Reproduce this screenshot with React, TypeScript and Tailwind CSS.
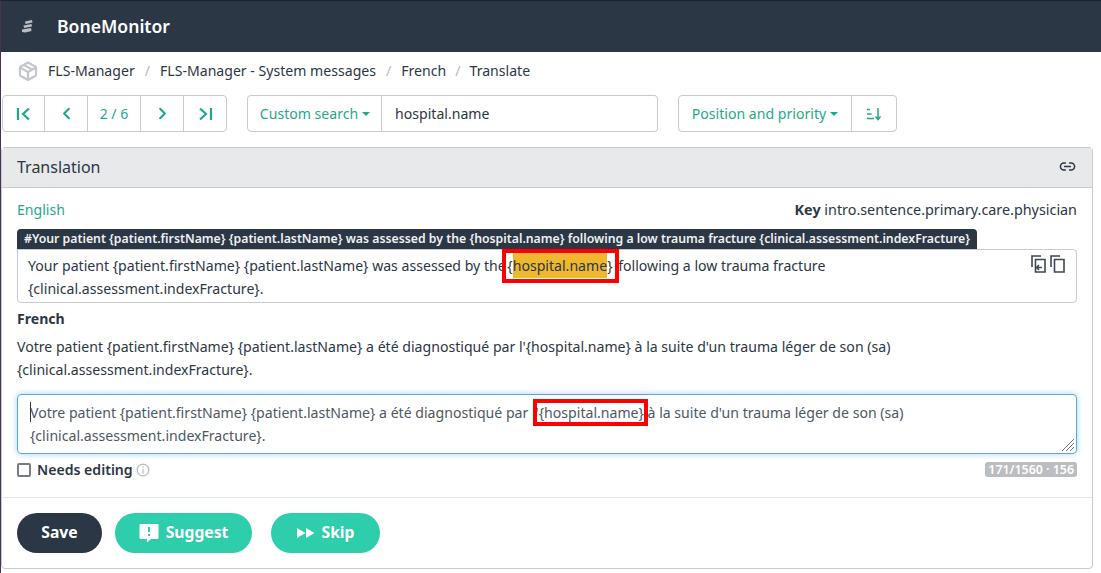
import { ChevronLeft, ChevronRight, Link2 } from "lucide-react";

const GREEN = "text-[#1fa88c]";

function FirstIcon() {
  return (
    <svg width="16" height="14" viewBox="0 0 16 14" fill="none" stroke="#1fa88c" strokeWidth="2.2">
      <path d="M2 1v12" />
      <path d="M13 1.500 7 7l6 5.500" />
    </svg>
  );
}

function LastIcon() {
  return (
    <svg width="16" height="14" viewBox="0 0 16 14" fill="none" stroke="#1fa88c" strokeWidth="2.2">
      <path d="M14 1v12" />
      <path d="M3 1.500 9 7l-6 5.500" />
    </svg>
  );
}

function Caret() {
  return <span className="ml-1 inline-block border-x-[4px] border-t-[4px] border-x-transparent border-t-[#1fa88c]" />;
}

function LogoIcon() {
  return (
    <svg width="13" height="13" viewBox="0 0 13 13" fill="#b9bec4">
      <path d="M4 1.500 11 0l.5 2.500-7 1.500z" />
      <path d="M2.500 5.500 10.500 4l.5 2.500-8 1.500z" />
      <path d="M1 9.500 10 8l.5 3-6 1.500-3.500-.5z" />
    </svg>
  );
}

function BoxIcon() {
  return (
    <svg width="20" height="20" viewBox="0 0 20 20" fill="none" stroke="#c4c7cb" strokeWidth="2.2" strokeLinejoin="round">
      <path d="M10 1.500 18 6v8.500L10 19l-8-4.500V6z" />
      <path d="M2 6.500 10 11l8-4.500" />
      <path d="M10 11v8" />
      <path d="M6 4l8 4.500" />
    </svg>
  );
}

function SortIcon() {
  return (
    <svg width="16" height="14" viewBox="0 0 16 14" fill="none" stroke="#1fa88c" strokeWidth="1.500">
      <path d="M1 2.500h3M1 7h4.500M1 11.500h7" />
      <path d="M12 1v11M9.500 9.500 12 12.500l2.500-3" />
    </svg>
  );
}

function CopyInIcon() {
  return (
    <svg width="15" height="18" viewBox="0 0 15 18" fill="none" stroke="#3d4854" strokeWidth="1.600">
      <path d="M1 12V1h9" />
      <path d="M4.500 4.500h9.500v12.500H4.500z" />
      <path d="M11 12.500H6M8 10l-2.500 2.500L8 15" />
    </svg>
  );
}

function CopyIcon() {
  return (
    <svg width="15" height="18" viewBox="0 0 15 18" fill="none" stroke="#3d4854" strokeWidth="1.600">
      <path d="M1 12V1h9" />
      <path d="M4.500 4.500h9.500v12.500H4.500z" />
    </svg>
  );
}

function RedBox({ className }: { className: string }) {
  return <span className={`pointer-events-none absolute border-[4px] border-[#f00] ${className}`} />;
}

export default function App() {
  return (
    <div className="h-[573px] w-[1101px] overflow-hidden border-l border-t border-l-[#4a3350] border-t-[#1a222b] bg-white font-['Noto_Sans',sans-serif] text-[14.1px] text-[#2b3745]">
      <header className="flex h-[51px] items-center bg-[#2b3745] pl-[20px]">
        <LogoIcon />
        <span className="ml-[23px] text-[17.6px] font-semibold text-white">BoneMonitor</span>
      </header>

      <nav className="flex h-[38px] items-center pl-[17px]">
        <BoxIcon />
        <span className="ml-[10px]">FLS-Manager</span>
        <span className="mx-[10px] text-[#b5b9be]">/</span>
        <span>FLS-Manager - System messages</span>
        <span className="mx-[10px] text-[#b5b9be]">/</span>
        <span>French</span>
        <span className="mx-[9px] text-[#b5b9be]">/</span>
        <span>Translate</span>
      </nav>

      <div className="mt-[5px] flex h-[37px] pl-[1px]">
        <div className={`flex w-[225px] rounded border border-[#c8cbce] ${GREEN}`}>
          <div className="flex w-[42px] items-center justify-center border-r border-[#c8cbce]">
            <FirstIcon />
          </div>
          <div className="flex w-[43px] items-center justify-center border-r border-[#c8cbce]">
            <ChevronLeft size={19} strokeWidth={2.6} />
          </div>
          <div className="flex w-[53px] items-center justify-center border-r border-[#c8cbce]">2 / 6</div>
          <div className="flex w-[43px] items-center justify-center border-r border-[#c8cbce]">
            <ChevronRight size={19} strokeWidth={2.6} />
          </div>
          <div className="flex flex-1 items-center justify-center">
            <LastIcon />
          </div>
        </div>

        <div className="ml-[20px] flex w-[411px]">
          <div className={`flex w-[135px] items-center justify-center rounded-l border border-[#c8cbce] pl-[1px] ${GREEN}`}>
            Custom search
            <Caret />
          </div>
          <div className="flex flex-1 items-center rounded-r border border-l-0 border-[#c8cbce] pl-[13px]">hospital.name</div>
        </div>

        <div className={`ml-[20px] flex w-[219px] rounded border border-[#c8cbce] ${GREEN}`}>
          <div className="flex w-[173px] items-center justify-center border-r border-[#c8cbce]">
            Position and priority
            <Caret />
          </div>
          <div className="flex flex-1 items-center justify-center">
            <SortIcon />
          </div>
        </div>
      </div>

      <section className="mt-[15px] w-[1092px] rounded border border-[#c8cbce]">
        <div className="flex h-[40px] items-center justify-between border-b border-[#c8cbce] bg-[#e8e9eb] pb-[2px] pl-[15px] pr-[16px] text-[16px]">
          <span>Translation</span>
          <Link2 size={17} strokeWidth={2.2} />
        </div>

        <div className="px-[15px] pt-[12px]">
          <div className="flex h-[20px] items-center justify-between">
            <span className={GREEN}>English</span>
            <span className="text-[14.35px]">
              <b className="font-bold">Key</b> intro.sentence.primary.care.physician
            </span>
          </div>

          <div className="mt-[9px] w-fit rounded-t bg-[#2b3745] px-[7px] pb-[1px] text-[12.27px] font-semibold leading-[19px] text-[#f0f1f2]">
            #Your patient {"{patient.firstName}"} {"{patient.lastName}"} was assessed by the {"{hospital.name}"} following a low trauma fracture {"{clinical.assessment.indexFracture}"}
          </div>

          <div className="relative h-[54px] w-[1060px] rounded-b rounded-tr border border-[#c8cbce] px-[10px] py-[4px] leading-[23px]">
            Your patient {"{patient.firstName}"} {"{patient.lastName}"} was assessed by the{" "}
            <span className="relative -ml-[2px] mr-[2px]">
              <RedBox className="-bottom-[8px] -left-[5px] -right-[6px] -top-[7px]" />
              {"{"}
              <span className="bg-[#f0b72f] py-[3px]">hospital.name</span>
              {"}"}
            </span>{" "}
            following a low trauma fracture
            <br />
            {"{clinical.assessment.indexFracture}"}.
            <div className="absolute right-[11px] top-[5px] flex gap-[4px]">
              <CopyInIcon />
              <CopyIcon />
            </div>
          </div>

          <div className="mt-[6px] font-bold leading-[19px]">French</div>
          <p className="mt-[7px] leading-[23px]">
            Votre patient {"{patient.firstName}"} {"{patient.lastName}"} a été diagnostiqué par l'{"{hospital.name}"} à la suite d'un trauma léger de son (sa)
            <br />
            {"{clinical.assessment.indexFracture}"}.
          </p>

          <div className="relative mt-[13px] h-[60px] w-[1060px] rounded border border-[#5aa9e6] px-[12px] py-[6px] leading-[23px] text-[#4d5864] shadow-[0_0_6px_#a8d3f5]">
            <span className="absolute left-[12px] top-[7px] h-[20px] w-px bg-[#2b3745]" />
            Votre patient {"{patient.firstName}"} {"{patient.lastName}"} a été diagnostiqué par l'
            <span className="relative">
              <RedBox className="-bottom-[4px] -left-[6px] -right-[4px] -top-[4px]" />
              {"{hospital.name}"}
            </span>{" "}
            à la suite d'un trauma léger de son (sa)
            <br />
            {"{clinical.assessment.indexFracture}"}.
            <svg className="absolute bottom-[1px] right-[1px]" width="14" height="14" viewBox="0 0 14 14" stroke="#777" strokeWidth="1">
              <path d="M1 13 13 1M5 13l8-8M9 13l4-4" />
            </svg>
          </div>

          <div className="mt-[5px] flex h-[21px] w-[1060px] items-center">
            <span className="h-[14px] w-[14px] rounded-[2px] border-2 border-[#777c85]" />
            <span className="ml-[6px] font-semibold">Needs editing</span>
            <svg className="ml-[3px]" width="14" height="14" viewBox="0 0 14 14" fill="none" stroke="#b8bbbf" strokeWidth="1.300">
              <circle cx="7" cy="7" r="5.800" />
              <path d="M7 6v4.500M7 3.500v1.300" />
            </svg>
            <span className="ml-auto rounded-[3px] bg-[#bbbdc0] px-[3px] text-[12.4px] font-semibold leading-[15px] text-white">171/1560 · 156</span>
          </div>
        </div>

        <div className="mt-[17px] flex gap-[13px] border-t border-[#e4e5e7] px-[15px] pb-[15px] pt-[15px] text-[15.7px] font-bold text-white">
          <button className="h-[40px] w-[85px] rounded-[20px] bg-[#2b3745]">Save</button>
          <button className="flex h-[40px] w-[137px] items-center justify-center gap-[7px] rounded-[20px] bg-[#2ecdab]">
            <svg width="20" height="20" viewBox="0 0 20 20" fill="#fff">
              <path d="M1.500 1h17a1 1 0 0 1 1 1v13a1 1 0 0 1-1 1H12l-4 3.500V16H1.500a1 1 0 0 1-1-1V2a1 1 0 0 1 1-1z" />
              <path d="M9 4h2v5H9zM9 11h2v2H9z" fill="#2ecdab" />
            </svg>
            Suggest
          </button>
          <button className="ml-[6px] flex h-[40px] w-[109px] items-center justify-center gap-[7px] rounded-[20px] bg-[#2ecdab]">
            <svg width="18" height="12" viewBox="0 0 18 12" fill="#fff">
              <path d="M0 1v10l8.500-5zM9 1v10l8.500-5z" />
            </svg>
            Skip
          </button>
        </div>
      </section>
    </div>
  );
}
